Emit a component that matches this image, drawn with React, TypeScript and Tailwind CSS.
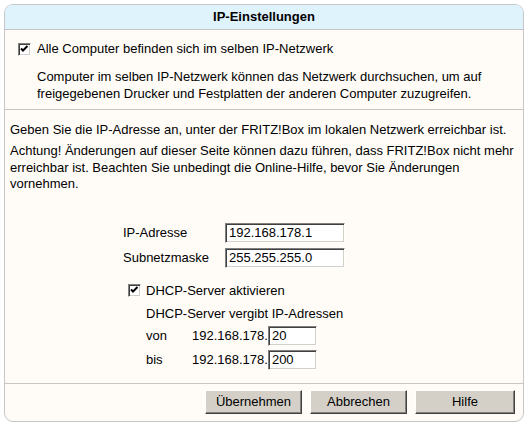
import React from "react";

const font = { fontFamily: '"Liberation Sans", Arial, sans-serif' };

function CheckBox() {
  return (
    <span className="inline-block w-[13px] h-[13px] bg-white border border-t-[#808080] border-l-[#808080] border-b-white border-r-white shadow-[inset_1px_1px_0_#404040,inset_-1px_-1px_0_#d4d0c8] relative shrink-0">
      <svg width="13" height="13" viewBox="0 0 13 13" className="absolute left-[-1px] top-[-1px]">
        <path d="M3 5.5 L5 7.5 L9.5 3" stroke="#000" strokeWidth="2" fill="none" />
      </svg>
    </span>
  );
}

function Input({ value, w }: { value: string; w: string }) {
  return (
    <div
      className={`${w} h-[20px] bg-white border border-t-[#808080] border-l-[#808080] border-b-white border-r-white shadow-[inset_1px_1px_0_#404040,inset_-1px_-1px_0_#d4d0c8] pl-[3px] text-[13px] leading-[18px] text-black`}
    >
      {value}
    </div>
  );
}

function Button({ label, w }: { label: string; w: string }) {
  return (
    <div
      className={`${w} h-[24px] bg-[#d4d0c8] border border-t-white border-l-white border-b-[#404040] border-r-[#404040] shadow-[inset_-1px_-1px_0_#808080] flex items-center justify-center text-[13px] text-black`}
    >
      {label}
    </div>
  );
}

export default function App() {
  return (
    <div className="w-[528px] h-[425px] bg-white pt-[4px] pl-[4px]" style={font}>
      <div className="w-[520px] h-[418px] border border-[#c6c6c6] rounded-[9px] overflow-hidden bg-[#fffcf8] flex flex-col text-[13px] text-black">
        <div className="h-[25px] bg-[#dff3fd] border-b border-[#c6c6c6] flex items-center justify-center font-bold text-[13px]">
          IP-Einstellungen
        </div>
        <div className="border-b border-[#c6c6c6] pt-[11px] pb-[7px] pl-[13px]">
          <div className="flex items-center gap-[6px] leading-[16px]">
            <CheckBox />
            <span>Alle Computer befinden sich im selben IP-Netzwerk</span>
          </div>
          <div className="mt-[11px] pl-[19px] leading-[17px]">
            Computer im selben IP-Netzwerk können das Netzwerk durchsuchen, um auf
            <br />
            freigegebenen Drucker und Festplatten der anderen Computer zuzugreifen.
          </div>
        </div>
        <div className="flex-1 border-b border-[#c6c6c6] pt-[11px] pl-[5px] pr-[4px]">
          <div className="leading-[17px]">
            Geben Sie die IP-Adresse an, unter der FRITZ!Box im lokalen Netzwerk erreichbar ist.
          </div>
          <div className="mt-[5px] leading-[16.5px]">
            Achtung! Änderungen auf dieser Seite können dazu führen, dass FRITZ!Box nicht mehr erreichbar ist. Beachten Sie unbedingt die Online-Hilfe, bevor Sie Änderungen vornehmen.
          </div>
          <div className="mt-[30px] pl-[113px]">
            <div className="flex items-center h-[20px]">
              <span className="w-[102px]">IP-Adresse</span>
              <Input value="192.168.178.1" w="w-[120px]" />
            </div>
            <div className="flex items-center h-[20px] mt-[5px]">
              <span className="w-[102px]">Subnetzmaske</span>
              <Input value="255.255.255.0" w="w-[120px]" />
            </div>
            <div className="mt-[15px] pl-[5px] flex items-center gap-[5px] leading-[16px]">
              <CheckBox />
              <span>DHCP-Server aktivieren</span>
            </div>
            <div className="mt-[7px] pl-[23px] leading-[16px]">DHCP-Server vergibt IP-Adressen</div>
            <div className="mt-[4px] pl-[23px] flex items-center h-[20px]">
              <span className="w-[46px]">von</span>
              <span>192.168.178.</span>
              <Input value="20" w="w-[49px]" />
            </div>
            <div className="mt-[4px] pl-[23px] flex items-center h-[20px]">
              <span className="w-[46px]">bis</span>
              <span>192.168.178.</span>
              <Input value="200" w="w-[49px]" />
            </div>
          </div>
        </div>
        <div className="h-[37px] flex justify-end items-start pt-[6px] pr-[8px] gap-[8px]">
          <Button label="Übernehmen" w="w-[97px]" />
          <Button label="Abbrechen" w="w-[97px]" />
          <Button label="Hilfe" w="w-[100px]" />
        </div>
      </div>
    </div>
  );
}
